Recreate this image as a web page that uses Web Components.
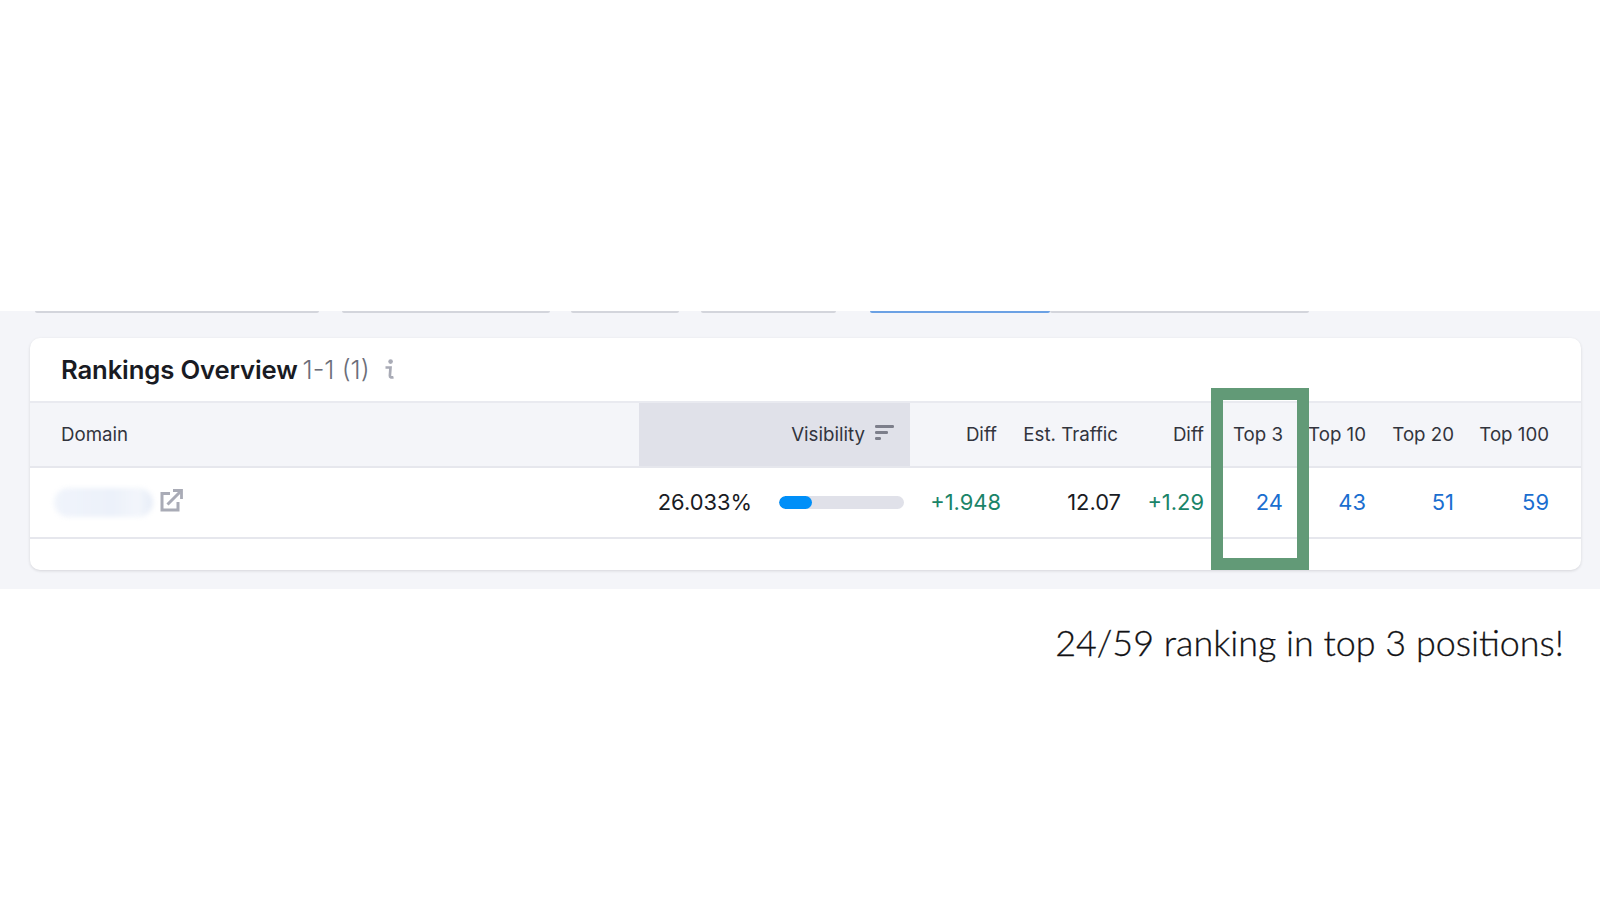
<!DOCTYPE html>
<html>
<head>
<meta charset="utf-8">
<title>Rankings Overview</title>
<style>
  html, body { margin: 0; background: #fff; }
  body { font-family: "Inter", "Liberation Sans", sans-serif; color: #191b23; }
</style>
</head>
<body>

<report-shot>
  <tab-strip slot="tabs"></tab-strip>
  <rankings-card slot="card">
    <span slot="title">Rankings Overview</span>
    <span slot="count">1-1 (1)</span>

    <table-row slot="head" kind="head">
      <table-cell align="left" pad="31">Domain</table-cell>
      <table-cell active>Visibility <sort-icon></sort-icon></table-cell>
      <table-cell nudge="4">Diff</table-cell>
      <table-cell nudge="3">Est. Traffic</table-cell>
      <table-cell>Diff</table-cell>
      <table-cell>Top 3</table-cell>
      <table-cell>Top 10</table-cell>
      <table-cell>Top 20</table-cell>
      <table-cell>Top 100</table-cell>
    </table-row>

    <table-row slot="body" kind="body">
      <table-cell align="left" pad="24"><domain-link></domain-link></table-cell>
      <table-cell><visibility-meter value="26.033%" fill="26"></visibility-meter></table-cell>
      <table-cell tone="green">+1.948</table-cell>
      <table-cell>12.07</table-cell>
      <table-cell tone="green">+1.29</table-cell>
      <table-cell tone="blue">24</table-cell>
      <table-cell tone="blue">43</table-cell>
      <table-cell tone="blue">51</table-cell>
      <table-cell tone="blue">59</table-cell>
    </table-row>
  </rankings-card>
  <span slot="caption">24/59 ranking in top 3 positions!</span>
</report-shot>

<script>
class ReportShot extends HTMLElement {
  constructor() {
    super();
    this.attachShadow({mode: "open"}).innerHTML = `
      <style>
        :host { display: block; padding-top: 311px; height: 589px; }
        .band {
          position: relative;
          background: #f4f5f9;
          height: 278px;
          box-sizing: border-box;
          padding: 27px 18px 0 30px;
        }
        ::slotted(tab-strip) { position: absolute; left: 0; top: 0; }
        .mark {
          position: absolute;
          left: 1211px; top: 77px;
          width: 98px; height: 182px;
          box-sizing: border-box;
          border: 12px solid #629a77;
        }
        .caption {
          text-align: right;
          padding: 32px 36px 0 0;
          font: 300 35.9px/44px "Lato", "Liberation Sans", sans-serif;
          -webkit-text-stroke: .3px #111114;
          color: #111114;
        }
      </style>
      <div class="band">
        <slot name="tabs"></slot>
        <slot name="card"></slot>
        <div class="mark"></div>
      </div>
      <div class="caption"><slot name="caption"></slot></div>
    `;
  }
}

class TabStrip extends HTMLElement {
  constructor() {
    super();
    this.attachShadow({mode: "open"}).innerHTML = `
      <style>
        :host { display: flex; padding-left: 35px; height: 2px; }
        i { display: block; height: 2px; background: #d3d5dc; border-radius: 0 0 2px 2px; }
        .on { background: #6ba1e4; }
      </style>
      <i style="width:284px;margin-right:23px"></i>
      <i style="width:208px;margin-right:21px"></i>
      <i style="width:108px;margin-right:22px"></i>
      <i style="width:135px;margin-right:34px"></i>
      <i class="on" style="width:180px"></i>
      <i style="width:259px"></i>
    `;
  }
}

class RankingsCard extends HTMLElement {
  constructor() {
    super();
    this.attachShadow({mode: "open"}).innerHTML = `
      <style>
        :host {
          display: block;
          background: #fff;
          width: 1551px;
          height: 232px;
          border-radius: 10px;
          box-shadow: 0 1px 3px rgba(25,27,35,.14);
          overflow: hidden;
        }
        .title {
          display: flex;
          align-items: center;
          height: 63px;
          padding-left: 31px;
          border-bottom: 2px solid #e9eaf0;
          font-size: 25.7px;
        }
        ::slotted([slot="title"]) { font-weight: 600; letter-spacing: -.15px; }
        ::slotted([slot="count"]) { color: #6c6e79; font-weight: 300; margin-left: 5px; }
        svg { margin-left: 14px; }
      </style>
      <div class="title">
        <slot name="title"></slot><slot name="count"></slot>
        <svg width="11" height="21" viewBox="0 0 11 21">
          <circle cx="6.6" cy="2.6" r="2.3" fill="#a9abb6"/>
          <path d="M1.500 8.500h5l-.6 8c-.1 1.900 1.100 2.300 3.600 1.700" fill="none" stroke="#a9abb6" stroke-width="2.700"/>
        </svg>
      </div>
      <slot name="head"></slot>
      <slot name="body"></slot>
    `;
  }
}

class TableRow extends HTMLElement {
  constructor() {
    super();
    this.attachShadow({mode: "open"}).innerHTML = `
      <style>
        :host {
          display: grid;
          grid-template-columns: 609px 271px 91px 120px 83px 79px 83px 88px 95px 33px;
          box-sizing: border-box;
          border-bottom: 2px solid #e6e7ed;
        }
        :host([kind="head"]) { height: 65px; background: #f4f5f9; font-size: 18.700px; color: #32343d; }
        :host([kind="body"]) { height: 71px; padding-bottom: 2px; font-size: 21.9px; }
      </style>
      <slot></slot>
    `;
  }
}

class TableCell extends HTMLElement {
  constructor() {
    super();
    this.attachShadow({mode: "open"}).innerHTML = `
      <style>
        :host {
          display: flex;
          align-items: center;
          justify-content: flex-end;
          white-space: nowrap;
          min-width: 0;
        }
        :host([align="left"]) { justify-content: flex-start; }
        :host([active]) { background: #e0e1e9; padding-right: 16px; gap: 10px; }
        :host([tone="green"]) { color: #1a8468; }
        :host([tone="blue"]) { color: #1a6ed0; }
      </style>
      <slot></slot>
    `;
  }
  connectedCallback() {
    if (this.hasAttribute("pad")) this.style.paddingLeft = this.getAttribute("pad") + "px";
    if (this.hasAttribute("nudge")) this.style.paddingRight = this.getAttribute("nudge") + "px";
  }
}

class SortIcon extends HTMLElement {
  constructor() {
    super();
    this.attachShadow({mode: "open"}).innerHTML = `
      <style>:host { display: inline-flex; margin-bottom: 3px; }</style>
      <svg width="19" height="16" viewBox="0 0 19 16" fill="#7d7f8b">
        <rect x="0" y="0" width="19" height="3" rx="1.300"/>
        <rect x="0" y="6" width="13" height="3" rx="1.300"/>
        <rect x="0" y="12" width="6" height="3" rx="1.300"/>
      </svg>
    `;
  }
}

class DomainLink extends HTMLElement {
  constructor() {
    super();
    this.attachShadow({mode: "open"}).innerHTML = `
      <style>
        :host { display: flex; align-items: center; gap: 7px; margin-top: 2px; }
        .blur {
          width: 99px; height: 29px;
          border-radius: 15px;
          background: linear-gradient(90deg, #f0f4fb, #ecf1fa 60%, #f3f6fb 85%, #e6ecf7);
          filter: blur(2.500px);
        }
        svg { margin-bottom: 5px; }
      </style>
      <div class="blur"></div>
      <svg width="23" height="23" viewBox="0 0 23 23" fill="none" stroke="#a9abb6" stroke-width="3">
        <path d="M10 4.500H2v16.500h16v-8"/>
        <path d="M7.500 15.500L20 3"/>
        <path d="M13 1.500h8.500v8.500" stroke-width="2.800"/>
      </svg>
    `;
  }
}

class VisibilityMeter extends HTMLElement {
  constructor() {
    super();
    this.attachShadow({mode: "open"}).innerHTML = `
      <style>
        :host { display: flex; align-items: center; gap: 27px; padding-right: 6px; }
        .track { width: 125px; height: 13px; margin-top: 2px; border-radius: 7px; background: #e0e1e9; overflow: hidden; }
        .fill { height: 100%; border-radius: 7px; background: #008ff8; }
      </style>
      <span class="value"></span>
      <div class="track"><div class="fill"></div></div>
    `;
  }
  connectedCallback() {
    this.shadowRoot.querySelector(".value").textContent = this.getAttribute("value");
    this.shadowRoot.querySelector(".fill").style.width = this.getAttribute("fill") + "%";
  }
}

customElements.define("report-shot", ReportShot);
customElements.define("tab-strip", TabStrip);
customElements.define("rankings-card", RankingsCard);
customElements.define("table-row", TableRow);
customElements.define("table-cell", TableCell);
customElements.define("sort-icon", SortIcon);
customElements.define("domain-link", DomainLink);
customElements.define("visibility-meter", VisibilityMeter);
</script>
</body>
</html>
